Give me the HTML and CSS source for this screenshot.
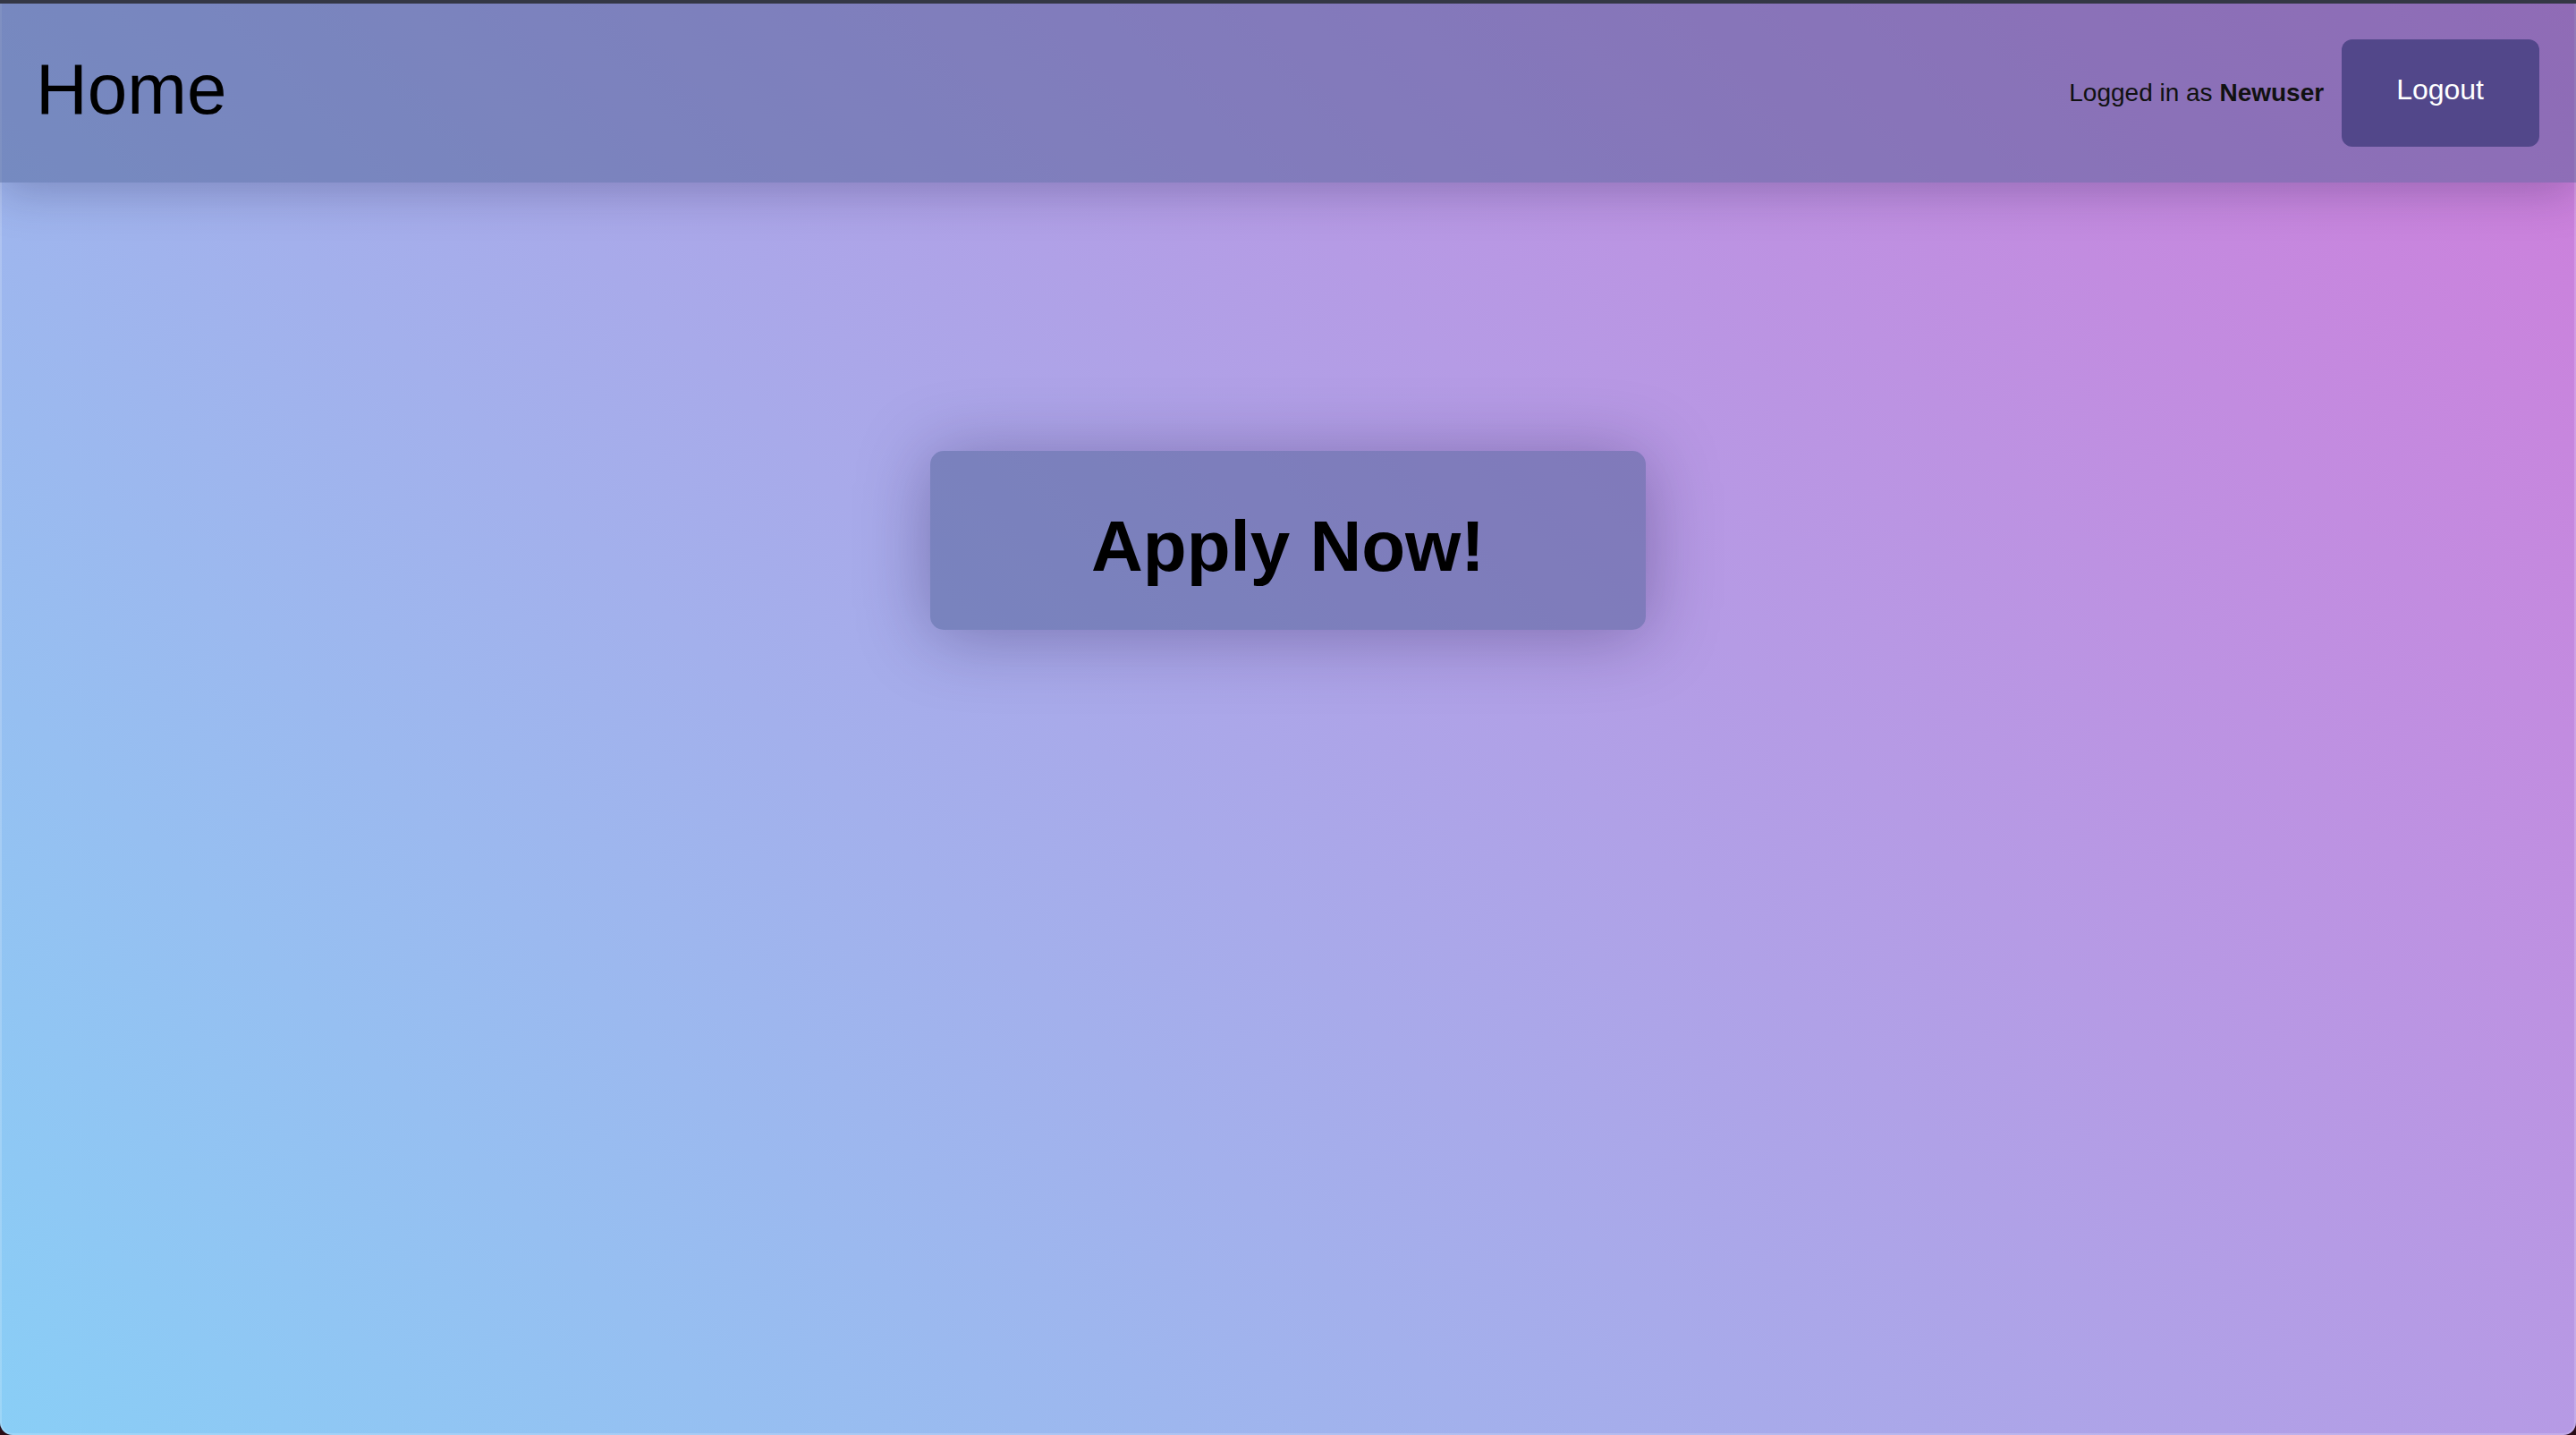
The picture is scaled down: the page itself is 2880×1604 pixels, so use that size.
FILE: index.html
```html
<!DOCTYPE html>
<html lang="en">
<head>
<meta charset="utf-8">
<title>Home</title>
<link rel="stylesheet" href="styles.css">
</head>
<body>
<div class="window">
  <header class="topbar">
    <h1 class="title">Home</h1>
    <div class="user">
      <span class="user-label">Logged in as <strong>Newuser</strong></span>
      <button class="logout" type="button">Logout</button>
    </div>
  </header>
  <main class="content">
    <button class="apply" type="button">Apply Now!</button>
  </main>
</div>
</body>
</html>
```

FILE: styles.css
```css
html, body {
  margin: 0;
  padding: 0;
  height: 100%;
}

body {
  background: #2a0c16;
  font-family: "Liberation Sans", Arial, Helvetica, sans-serif;
}

.window {
  position: relative;
  box-sizing: border-box;
  height: 1604px;
  border-top: 4px solid #343745;
  border-radius: 0 0 14px 14px;
  overflow: hidden;
  background: linear-gradient(45deg, #89cef6 0%, #cf7ddb 100%);
  display: flex;
  flex-direction: column;
}

.window::after {
  content: "";
  position: absolute;
  inset: 0;
  border: 2px solid rgba(255, 255, 255, 0.18);
  border-top: none;
  border-radius: 0 0 14px 14px;
  pointer-events: none;
}

.topbar {
  height: 200px;
  box-sizing: border-box;
  padding: 0 41px 0 40px;
  display: flex;
  align-items: center;
  justify-content: space-between;
  background: rgba(66, 86, 137, 0.45);
  box-shadow: 0 8px 50px rgba(20, 20, 60, 0.28);
  position: relative;
  z-index: 1;
}

.title {
  margin: 0 0 9px 0;
  font-size: 80px;
  font-weight: 400;
  color: #000;
  line-height: 92px;
}

.user {
  display: flex;
  align-items: center;
  gap: 20px;
}

.user-label {
  font-size: 28px;
  color: #111;
}

.user-label strong {
  font-weight: 700;
}

.logout {
  font-family: inherit;
  font-size: 32px;
  line-height: 36px;
  color: #fff;
  background: #52478a;
  border: none;
  border-radius: 12px;
  padding: 38px 62px 46px 61px;
  margin: 0;
}

.content {
  flex: 1;
  display: flex;
  flex-direction: column;
  align-items: center;
  padding-top: 300px;
}

.apply {
  width: 800px;
  height: 200px;
  box-sizing: border-box;
  padding: 61px 0 47px;
  font-family: inherit;
  font-size: 80px;
  font-weight: 700;
  line-height: 92px;
  color: #000;
  background: rgba(66, 84, 138, 0.46);
  border: none;
  border-radius: 15px;
  box-shadow: 0 6px 80px rgba(30, 20, 70, 0.35);
}
```
